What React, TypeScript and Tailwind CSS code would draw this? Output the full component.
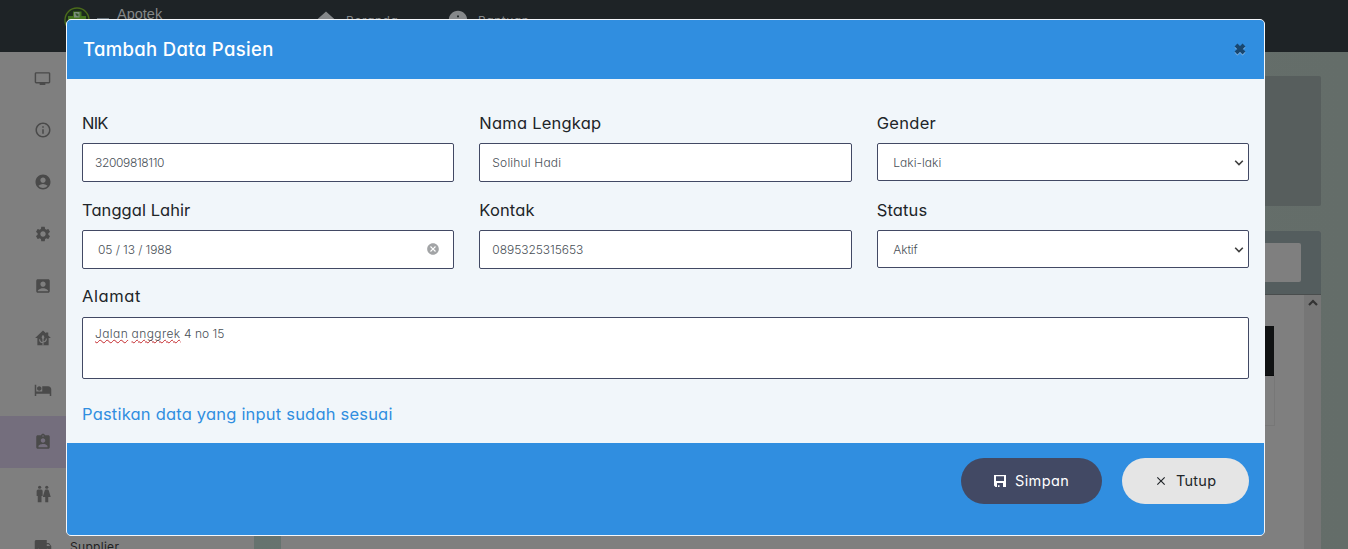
import type { ReactNode } from "react";
import {
  MdTv,
  MdInfoOutline,
  MdAccountCircle,
  MdSettings,
  MdAccountBox,
  MdHotel,
  MdAssignmentInd,
  MdLocalShipping,
  MdHome,
  MdInfo,
  MdCancel,
  MdClose,
} from "react-icons/md";

function GreenhouseIcon() {
  return (
    <svg width="18" height="18" viewBox="0 0 24 24" fill="currentColor">
      <path d="M12 2 1.500 12H4.500V21.500h15V12h3L19 8.700V4.500h-3V5.800z" />
      <path
        d="M12 9V21.500M12 18c-3 0-4.500-1.800-4.500-4.500M12 17c3 0 4.500-1.800 4.500-4.500"
        fill="none"
        stroke="#7f7f7f"
        strokeWidth="1.500"
      />
      <path d="M12 7.500 14 11l-2 3-2-3z" fill="#7f7f7f" />
    </svg>
  );
}

function PeopleIcon() {
  return (
    <svg width="18" height="18" viewBox="0 0 24 24" fill="currentColor">
      <circle cx="7.500" cy="3" r="2.100" />
      <path d="M5.500 6h4a2 2 0 0 1 2 2v6.500H10V23H5v-8.500H3.500V8a2 2 0 0 1 2-2z" />
      <circle cx="17" cy="3" r="2.100" />
      <path d="M16 6h2c.8 0 1.400.5 1.700 1.200L22.300 16H19v7h-4v-7h-3.300l2.600-8.800C14.600 6.500 15.200 6 16 6z" />
    </svg>
  );
}

function SaveIcon() {
  return (
    <svg width="12" height="12" viewBox="0 0 12 12" fill="currentColor" fillRule="evenodd">
      <path d="M0 0h12v12H1.500L0 10.500zM2 1.300v4.700h8V1.300zM3 8V12H4v-1.800h1.500V12H9V8z" />
    </svg>
  );
}

function Chevron() {
  return (
    <svg width="10" height="6" viewBox="0 0 10 6" className="shrink-0">
      <path d="M1.200 0.800 5 4.600 8.800 0.800" fill="none" stroke="#3f3f3f" strokeWidth="1.600" />
    </svg>
  );
}

const nav: { icon: ReactNode; label?: string; active?: boolean }[] = [
  { icon: <MdTv size={17} /> },
  { icon: <MdInfoOutline size={18} /> },
  { icon: <MdAccountCircle size={18} /> },
  { icon: <MdSettings size={18} /> },
  { icon: <MdAccountBox size={18} /> },
  { icon: <GreenhouseIcon /> },
  { icon: <MdHotel size={18} /> },
  { icon: <MdAssignmentInd size={18} />, active: true },
  { icon: <PeopleIcon /> },
  { icon: <MdLocalShipping size={18} />, label: "Supplier" },
];

function Field({ label, spacing, children }: { label: string; spacing: string; children: ReactNode }) {
  return (
    <div className="flex flex-col gap-2">
      <span className={`h-6 text-[16.5px] leading-6 whitespace-nowrap text-[#212529] ${spacing}`}>{label}</span>
      {children}
    </div>
  );
}

const box = "flex items-center rounded-xs border border-[#424964] bg-white text-xs font-light text-[#495057]";

const misspelt =
  "underline decoration-[#c4282c] decoration-wavy decoration-1 underline-offset-1 [text-decoration-skip-ink:none]";

function TextBox({ value, spacing }: { value: string; spacing: string }) {
  return <div className={`${box} h-[39px] px-3 ${spacing}`}>{value}</div>;
}

function SelectBox({ value, spacing }: { value: string; spacing: string }) {
  return (
    <div className={`${box} h-[38px] justify-between pt-px pr-1 pl-[15.5px] ${spacing}`}>
      <span>{value}</span>
      <Chevron />
    </div>
  );
}

function Backdrop() {
  return (
    <div className="flex h-full flex-col">
      <header className="flex h-[52px] shrink-0 items-start bg-[#1e2326] text-[#85888a]">
        <svg width="26" height="26" viewBox="0 0 26 26" className="mt-[7px] ml-16 shrink-0">
          <circle cx="13" cy="13" r="12" fill="#1b2a1c" stroke="#4b6b1b" strokeWidth="1.400" />
          <path d="M9 4.500h8.500V9H22v6H4V9h5z" fill="#44731f" />
          <path d="M10 5h5.500v5.500H10z" fill="#7b8d7c" />
          <path d="M11.500 6c0 2 .5 3 3 3.500V7z" fill="#35562c" />
        </svg>
        <span className="mt-[18px] ml-[7px] h-[2px] w-3 bg-[#65717a]" />
        <span className="mt-1 ml-2 w-[198px] font-['Liberation_Sans'] text-[14.5px] leading-[20px]">Apotek</span>
        <MdHome size={20} className="mt-[9px] ml-px shrink-0" />
        <span className="mt-3 ml-2.5 w-[101px] text-xs leading-[18px] tracking-[0.6px]">Beranda</span>
        <MdInfo size={22} className="mt-[9px] shrink-0" />
        <span className="mt-3 ml-[9px] text-xs leading-[18px] tracking-[0.5px]">Bantuan</span>
      </header>
      <div className="flex min-h-0 flex-1 overflow-hidden">
        <nav className="flex w-[254px] shrink-0 flex-col bg-[#7f7f7f] text-[#4a4a4a]">
          {nav.map((item, i) => (
            <div
              key={i}
              className={`flex h-[52px] shrink-0 items-center pl-[34px] ${item.active ? "bg-[#746e7d]" : ""}`}
            >
              {item.icon}
              {item.label && <span className="mt-0.5 ml-[18px] text-xs tracking-[0.3px] text-[#222]">{item.label}</span>}
            </div>
          ))}
        </nav>
        <main className="flex flex-1 flex-col bg-linear-to-r from-[#66736f] via-[#66706c] to-[#646d69] px-[27px] pt-6">
          <div className="h-[130px] shrink-0 rounded-xs bg-[#575e5d]" />
          <div className="mt-[25px] flex flex-1 flex-col overflow-hidden rounded-t-xs bg-[#7f7f7f]">
            <div className="h-16 shrink-0 border-b border-[#494d4d] bg-[#545d5e] px-5 pt-3">
              <div className="h-[39px] rounded-xs bg-[#7f7f7f]" />
            </div>
            <div className="flex flex-1">
              <div className="flex-1 pt-[31px] pr-[29px]">
                <div className="mr-px h-[50px] border-b border-[#080909] bg-[#101213]" />
                <div className="h-[50px] border-r border-b border-[#777]" />
              </div>
              <div className="flex w-[17px] justify-center bg-[#767676] pt-1">
                <svg width="10" height="7" viewBox="0 0 10 7">
                  <path d="M1 6 5 2l4 4" fill="none" stroke="#333" strokeWidth="2.200" />
                </svg>
              </div>
            </div>
          </div>
        </main>
      </div>
    </div>
  );
}

function PatientDialog() {
  return (
    <div
      role="dialog"
      className="absolute top-[19px] left-[66px] flex h-[517px] w-[1199px] flex-col overflow-hidden rounded-[5px] border border-[#f4f7fb] bg-[#f1f6fa]"
    >
      <div className="flex h-[59px] shrink-0 items-center justify-between bg-[#308ee0] pr-[17px] pl-4">
        <h5 className="text-[18.5px] font-medium tracking-[0.34px] text-white">Tambah Data Pasien</h5>
        <svg width="14" height="14" viewBox="0 0 14 14" className="-mt-0.5">
          <path d="m3 4 8 8M11 4l-8 8" stroke="#86b9e8" strokeWidth="4" />
          <path d="m3 3 8 8M11 3l-8 8" stroke="#184770" strokeWidth="4" />
        </svg>
      </div>

      <div className="flex flex-1 flex-col gap-4 px-[15px] pt-8">
        <div className="grid grid-cols-3 gap-x-[25px] gap-y-4">
          <Field label="NIK" spacing="tracking-[-0.8px]">
            <TextBox value="32009818110" spacing="tracking-[-0.35px]" />
          </Field>
          <Field label="Nama Lengkap" spacing="tracking-[0.22px]">
            <TextBox value="Solihul Hadi" spacing="tracking-[0.18px]" />
          </Field>
          <Field label="Gender" spacing="tracking-[0.3px]">
            <SelectBox value="Laki-laki" spacing="tracking-[0.05px]" />
          </Field>
          <Field label="Tanggal Lahir" spacing="tracking-[0.06px]">
            <div className={`${box} h-[39px] justify-between pr-[13px] pl-[15px] tracking-[-0.08px]`}>
              <span>05 / 13 / 1988</span>
              <MdCancel size={14} className="-mt-px text-[#a2a4a6]" />
            </div>
          </Field>
          <Field label="Kontak" spacing="tracking-[0.15px]">
            <TextBox value="0895325315653" spacing="tracking-[-0.05px]" />
          </Field>
          <Field label="Status" spacing="tracking-[0.15px]">
            <SelectBox value="Aktif" spacing="tracking-[-0.1px]" />
          </Field>
        </div>
        <Field label="Alamat" spacing="-mt-px mb-px tracking-[0.6px]">
          <div className="h-[62px] rounded-xs border border-[#424964] bg-white px-3 pt-[7px] text-xs leading-[18px] font-light text-[#495057]">
            <span className={`tracking-[0.4px] ${misspelt}`}>Jalan</span>{" "}
            <span className={`tracking-[0.42px] ${misspelt}`}>anggrek</span> 4 no 15
          </div>
        </Field>
        <p className="mt-[7px] text-[16.5px] leading-6 tracking-[0.2px] text-[#308ee0]">
          Pastikan data yang input sudah sesuai
        </p>
      </div>

      <div className="flex h-[92px] shrink-0 items-start justify-end gap-5 bg-[#308ee0] pt-[15px] pr-[15px]">
        <button className="flex h-[46px] w-[141px] items-center rounded-full bg-[#424964] pl-[33px] text-[14.5px] tracking-[0.4px] text-white">
          <SaveIcon />
          <span className="ml-[9px]">Simpan</span>
        </button>
        <button className="flex h-[46px] w-[127px] items-center rounded-full bg-[#e5e5e5] pl-8 text-[14.5px] tracking-[0.25px] text-[#212529]">
          <MdClose size={14} />
          <span className="ml-2">Tutup</span>
        </button>
      </div>
    </div>
  );
}

export default function App() {
  return (
    <div className="relative h-[549px] w-[1348px] overflow-hidden font-['Inter',sans-serif] [font-feature-settings:'cv11']">
      <Backdrop />
      <PatientDialog />
    </div>
  );
}
